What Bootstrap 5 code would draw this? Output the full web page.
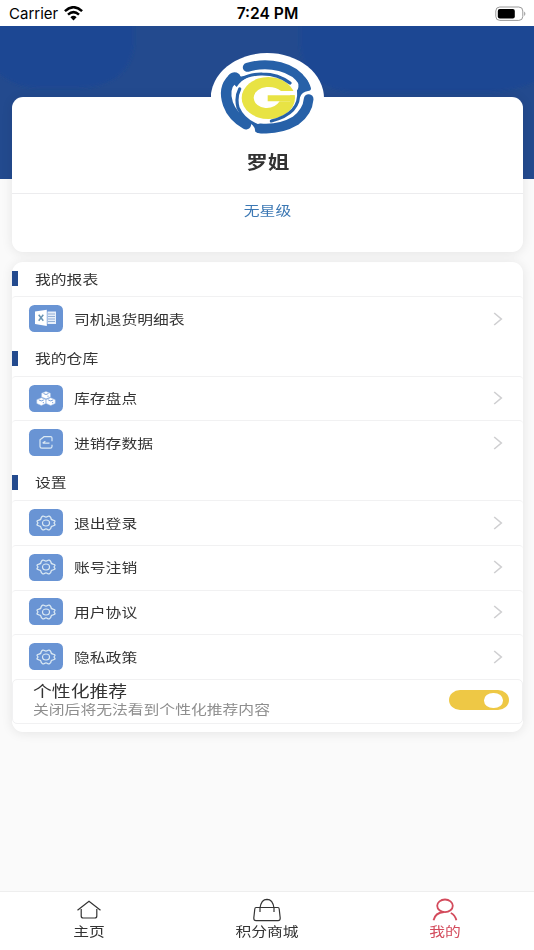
<!DOCTYPE html>
<html lang="zh-CN">
<head>
<meta charset="utf-8">
<meta name="viewport" content="width=device-width, initial-scale=1">
<title>我的</title>
<link href="https://cdn.jsdelivr.net/npm/bootstrap@5.3.0/dist/css/bootstrap.min.css" rel="stylesheet">
<style>
body{font-family:"Noto Sans CJK SC",sans-serif;background:#fafafa;color:#333;font-size:13px;line-height:18px;overflow:hidden}
.screen{height:950px}
.status{height:26px;background:#fff;font-family:Inter,sans-serif;color:#000;font-size:15px;padding:1px 8px 0 9px}
.status>div{flex:1 1 0}
.clock{font-weight:600;font-size:15.6px}
.wifi{margin-left:-2px}
.hero{height:153px;background:#234a8e}
.panel{margin:0 11px 0 12px;background:#fff;border-radius:11px;box-shadow:0 1px 12px rgba(0,0,0,.09)}
.profile{height:155px;margin-top:-82px}
.avatar{width:113px;height:95px;margin-top:-44px}
.wide{display:inline-block;transform:scaleX(1.215);transform-origin:left center;white-space:nowrap}
.wide-mid{transform-origin:center}
.username{font-size:17.8px;font-weight:700;line-height:24px;margin-top:1px}
.level{height:59px;border-top:1px solid #ececee;color:#3c78b4;padding-top:7px}
.menu{height:470.5px;margin-top:9.6px}
.group-title{height:35px;gap:16.5px;padding-bottom:.5px}
.menu .group-title:first-child{height:34.5px}
.group-title::before{content:"";width:6px;height:15px;background:#234a8e}
.entry{height:44.7px;border-top:1px solid #f1f1f2;border-radius:4px;padding:0 20px .4px 16.5px;gap:11.5px}
.tile{width:34.3px;height:27px;background:#6994d4;border-radius:5.5px;margin-bottom:.6px}
.prefer{height:45px;border:1px solid #f1f1f2;border-radius:5px;padding:0 13px 2px 20px}
.prefer-title{font-size:15.5px;line-height:18px}
.prefer-note{color:#8e8e8e;line-height:20px}
.toggle{width:60px;height:20px;border-radius:11px/10px;background:#eec845;padding-right:6.5px}
.knob{width:18.5px;height:14.5px;border-radius:50%;background:#fff}
.tabs{height:59px;background:#fff;border-top:1px solid #eee}
.tab{flex:1 1 0;color:#333;padding-top:5px}
.tab svg{height:25px}
.tab .wide{margin-top:-.5px}
.tab.current{color:#d34b5c}
svg{display:block}
</style>
<script src="https://cdn.jsdelivr.net/npm/bootstrap@5.3.0/dist/js/bootstrap.bundle.min.js"></script>
</head>
<body>
<svg width="0" height="0" class="position-absolute" aria-hidden="true">
 <symbol id="gear" viewBox="0 0 20 16"><path d="M5.2 2.6Q6.8.2 8.4 1.5Q10 2.8 11.6 1.5Q13.2.2 14.8 2.6Q14.9 4.9 17 5.1Q19.9 5.6 18.6 7Q17.6 8 18.6 9Q19.9 10.4 17 10.9Q14.9 11.1 14.8 13.4Q13.2 15.8 11.6 14.5Q10 13.2 8.4 14.5Q6.8 15.8 5.2 13.4Q5.1 11.1 3 10.9Q.1 10.4 1.4 9Q2.4 8 1.4 7Q.1 5.6 3 5.1Q5.1 4.9 5.2 2.6Z" fill="none" stroke="#dbe9f3" stroke-width="1.2"/><ellipse cx="10" cy="8" rx="3.5" ry="3" fill="none" stroke="#dbe9f3" stroke-width="1.2"/></symbol>
 <symbol id="chev" viewBox="0 0 10 14"><path d="M1.2 1L8.3 7L1.2 13" fill="none" stroke="#cfcfd1" stroke-width="1.6"/></symbol>
</svg>
<div class="screen d-flex flex-column">
 <header class="status d-flex align-items-center">
  <div class="d-flex align-items-center gap-2"><span>Carrier</span>
   <svg class="wifi" width="19" height="15" viewBox="0 0 19 15"><g fill="none" stroke="#000" stroke-width="2.5"><path d="M.9 5.1Q9.5-2.7 18.1 5.1"/><path d="M4 8.6Q9.5 3.6 15 8.6"/></g><path d="M6.4 11.2Q9.5 8.5 12.6 11.2L9.5 14.5Z"/></svg></div>
  <div class="text-center clock">7:24 PM</div>
  <div class="d-flex justify-content-end"><svg width="32" height="16" viewBox="0 0 32 16"><rect x="1.8" y="1" width="27" height="13.4" rx="4" fill="#fff" stroke="#999"/><rect x="3.8" y="3" width="17" height="9.4" rx="2" fill="#000"/><path d="M30.2 5.5Q32.5 7.7 30.2 10Z" fill="#999"/></svg></div>
 </header>
 <div class="hero flex-shrink-0"><svg width="534" height="153" viewBox="0 0 534 153"><defs><filter id="soft"><feGaussianBlur stdDeviation="1.5"/></filter></defs><path filter="url(#soft)" d="M-9-9H134V18Q130 60 78 62H40Q12 62-9 40ZM300-9H543V50Q526 64 490 66H350Q302 60 300 18Z" fill="#1c4693"/></svg></div>
 <section class="panel profile flex-shrink-0 d-flex flex-column align-items-center position-relative">
  <svg class="avatar flex-shrink-0" viewBox="33 24 339 285">
   <ellipse cx="202" cy="160" rx="170" ry="136" fill="#fff"/>
   <ellipse cx="205" cy="159" rx="80" ry="63" fill="#e8e344"/>
   <path d="M290 138H243Q226 124 200 126Q164 131 161 158Q163 184 196 189Q224 191 239 169H270V151H290Z" fill="#fff"/>
   <path d="M203 151H284Q284 161 279 169H203Z" fill="#e8e344"/>
   <g fill="none" stroke="#2761a8" stroke-linecap="round">
    <g stroke-width="27">
     <path d="M142 67Q192 52 240 65Q290 78 311 114"/>
     <path d="M97 102Q68 130 84 177Q97 214 138 238" stroke-width="31"/>
     <path d="M326 162Q323 200 287 227Q240 255 181 250" stroke-width="29"/>
    </g>
    <g stroke-width="9.5">
     <path d="M120 104Q150 86 187 87Q235 87 270 114"/>
     <path d="M296 138Q302 206 214 228"/>
     <path d="M170 241Q129 224 114 188Q106 157 119 132"/>
    </g>
   </g>
   <g fill="#2761a8">
    <path d="M82 99Q88 83 103 82Q118 83 121 94Q134 95 147 90L150 94Q125 104 110 126Z"/>
    <path d="M288 95L314 95Q328 110 333 130Q333 138 324 138Q306 140 299 158L291 137Q298 126 294 110Z"/>
    <path d="M156 233Q168 239 190 238V264Q174 267 166 260Q165 247 156 238Z"/>
   </g>
  </svg>
  <div class="username wide wide-mid">罗姐</div>
  <div class="level w-100 text-center mt-auto"><span class="wide wide-mid">无星级</span></div>
 </section>
 <main class="panel menu flex-shrink-0">
  <div class="group-title d-flex align-items-center"><span class="wide">我的报表</span></div>
  <div class="entry d-flex align-items-center"><span class="tile d-flex align-items-center justify-content-center"><svg width="22" height="18" viewBox="0 0 22 18"><path d="M0 2.5L11.8.8V17L0 15Z" fill="#fff"/><path d="M12.5 2.5H21V15H12.5Z" fill="#e7effa"/><path d="M13 5H20M13 7.5H20M13 10H20M13 12.5H20" stroke="#7d9fcd" stroke-width=".8"/><path d="M3.7 5.8L8.3 11.7M8.3 5.8L3.7 11.7" stroke="#6994b4" stroke-width="1.5"/></svg></span><span class="wide">司机退货明细表</span><svg class="ms-auto" width="10" height="14"><use href="#chev"/></svg></div>
  <div class="group-title d-flex align-items-center"><span class="wide">我的仓库</span></div>
  <div class="entry d-flex align-items-center"><span class="tile d-flex align-items-center justify-content-center"><svg width="20" height="15" viewBox="0 0 20 15"><g fill="#fff" stroke="#a9c3e6" stroke-width=".5"><path d="M5.6 2.3L10 .4L14.4 2.3V6L10 7.8L5.6 6Z"/><path d="M.8 8.7L5.3 6.7L9.8 8.7V12.4L5.3 14.5L.8 12.4Z"/><path d="M10.2 8.7L14.7 6.7L19.2 8.7V12.4L14.7 14.5L10.2 12.4Z"/></g><path d="M7.5 2.5L10 3.5L12.5 2.5M2.8 8.9L5.3 9.9L7.8 8.9M12.2 8.9L14.7 9.9L17.2 8.9M12 4.6V5.8M7.3 11V12.2M16.7 11V12.2" fill="none" stroke="#6994d4" stroke-width=".9"/></svg></span><span class="wide">库存盘点</span><svg class="ms-auto" width="10" height="14"><use href="#chev"/></svg></div>
  <div class="entry d-flex align-items-center"><span class="tile d-flex align-items-center justify-content-center"><svg width="14" height="13" viewBox="0 0 14 13"><path d="M13 5.2V2Q13 .7 11.5.7H5L1 3.8V10.5Q1 12.2 2.8 12.2H11.2Q13 12.2 13 10.5V8.8M3.6 7.2H10.5M3.6 7L6.4 5.2" fill="none" stroke="#dbe9f3" stroke-width="1.2"/></svg></span><span class="wide">进销存数据</span><svg class="ms-auto" width="10" height="14"><use href="#chev"/></svg></div>
  <div class="group-title d-flex align-items-center"><span class="wide">设置</span></div>
  <div class="entry d-flex align-items-center"><span class="tile d-flex align-items-center justify-content-center"><svg width="20" height="16"><use href="#gear"/></svg></span><span class="wide">退出登录</span><svg class="ms-auto" width="10" height="14"><use href="#chev"/></svg></div>
  <div class="entry d-flex align-items-center"><span class="tile d-flex align-items-center justify-content-center"><svg width="20" height="16"><use href="#gear"/></svg></span><span class="wide">账号注销</span><svg class="ms-auto" width="10" height="14"><use href="#chev"/></svg></div>
  <div class="entry d-flex align-items-center"><span class="tile d-flex align-items-center justify-content-center"><svg width="20" height="16"><use href="#gear"/></svg></span><span class="wide">用户协议</span><svg class="ms-auto" width="10" height="14"><use href="#chev"/></svg></div>
  <div class="entry d-flex align-items-center"><span class="tile d-flex align-items-center justify-content-center"><svg width="20" height="16"><use href="#gear"/></svg></span><span class="wide">隐私政策</span><svg class="ms-auto" width="10" height="14"><use href="#chev"/></svg></div>
  <div class="prefer d-flex align-items-center justify-content-between">
   <div class="d-flex flex-column align-items-start"><span class="wide prefer-title">个性化推荐</span><span class="wide prefer-note">关闭后将无法看到个性化推荐内容</span></div>
   <div class="toggle d-flex align-items-center justify-content-end"><span class="knob"></span></div>
  </div>
 </main>
 <nav class="tabs d-flex mt-auto flex-shrink-0">
  <div class="tab d-flex flex-column align-items-center"><svg width="26" viewBox="0 0 26 25"><path d="M1.5 13.3L13 4.2L24.5 13.3M5.2 12V19Q5.2 21 7.2 21H18.8Q20.8 21 20.8 19V12" fill="none" stroke="currentColor" stroke-width="1.2"/></svg><span class="wide wide-mid">主页</span></div>
  <div class="tab d-flex flex-column align-items-center"><svg width="28" viewBox="0 0 28 25"><path d="M3 10.5H25Q26 10.5 26.2 12L27.2 21Q27.3 23.6 25 23.7H3Q.7 23.6.8 21L1.8 12Q2 10.5 3 10.5ZM7 15V11Q8.2 2.4 14 2.3Q19.8 2.4 21 11V15" fill="none" stroke="currentColor" stroke-width="1.2"/></svg><span class="wide wide-mid">积分商城</span></div>
  <div class="tab current d-flex flex-column align-items-center"><svg width="26" viewBox="0 0 26 25"><g fill="none" stroke="currentColor" stroke-width="1.8"><ellipse cx="13" cy="8.8" rx="7.8" ry="6.3"/><path d="M1.5 23.3Q3.2 15.5 12 15M18.8 16Q23 18 24.4 23.3"/></g></svg><span class="wide wide-mid">我的</span></div>
 </nav>
</div>
</body>
</html>
